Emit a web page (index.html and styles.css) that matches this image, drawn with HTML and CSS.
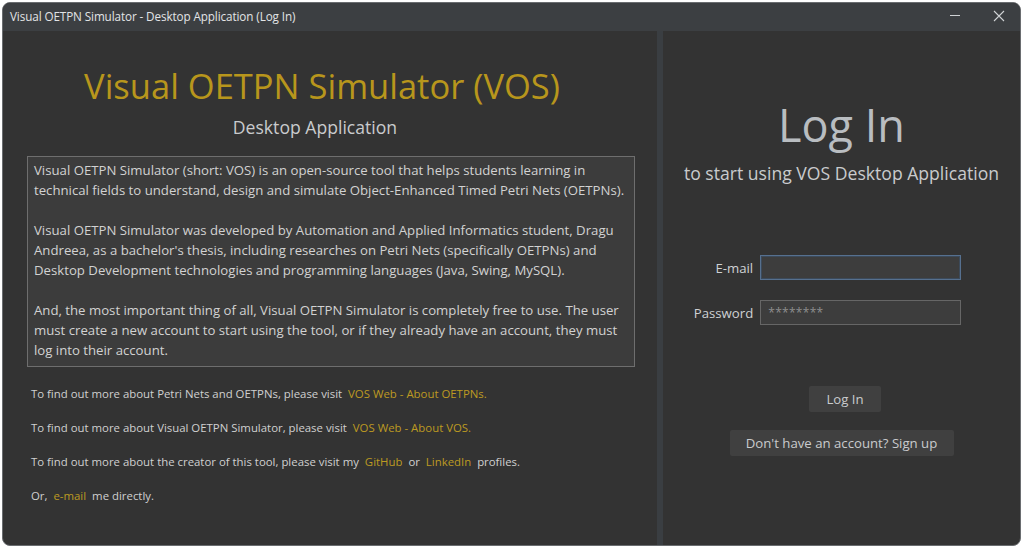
FILE: index.html
```html
<!DOCTYPE html>
<html>
<head>
<meta charset="utf-8">
<link rel="stylesheet" href="styles.css">
</head>
<body>
<div class="window">
  <div class="titlebar">
    <span class="title">Visual OETPN Simulator - Desktop Application (Log In)</span>
    <div class="controls">
      <svg class="min" width="12" height="12" viewBox="0 0 12 12"><path d="M1 5.5h10" stroke="#cfd2d4" stroke-width="1"/></svg>
      <svg class="close" width="12" height="12" viewBox="0 0 12 12"><path d="M1 1L11 11M11 1L1 11" stroke="#cfd2d4" stroke-width="1.1"/></svg>
    </div>
  </div>
  <div class="content">
    <div class="left">
      <h1 class="heading">Visual OETPN Simulator (VOS)</h1>
      <div class="subheading">Desktop Application</div>
      <div class="desc">
        <p>Visual OETPN Simulator (short: VOS) is an open-source tool that helps students learning in technical fields to understand, design and simulate Object-Enhanced Timed Petri Nets (OETPNs).</p>
        <p>Visual OETPN Simulator was developed by Automation and Applied Informatics student, Dragu Andreea, as a bachelor's thesis, including researches on Petri Nets (specifically OETPNs) and Desktop Development technologies and programming languages (Java, Swing, MySQL).</p>
        <p>And, the most important thing of all, Visual OETPN Simulator is completely free to use. The user must create a new account to start using the tool, or if they already have an account, they must log into their account.</p>
      </div>
      <div class="links">
        <div class="line">To find out more about Petri Nets and OETPNs, please visit <a class="link">VOS Web - About OETPNs.</a></div>
        <div class="line">To find out more about Visual OETPN Simulator, please visit <a class="link">VOS Web - About VOS.</a></div>
        <div class="line">To find out more about the creator of this tool, please visit my <a class="link">GitHub</a> or <a class="link">LinkedIn</a> profiles.</div>
        <div class="line">Or, <a class="link">e-mail</a> me directly.</div>
      </div>
    </div>
    <div class="divider"></div>
    <div class="right">
      <div class="login-title">Log In</div>
      <div class="login-sub">to start using VOS Desktop Application</div>
      <div class="form">
        <label class="lbl">E-mail</label>
        <div class="input focus"></div>
        <label class="lbl">Password</label>
        <div class="input"><span class="ph">********</span></div>
      </div>
      <div class="btn btn-login">Log In</div>
      <div class="btn btn-signup">Don't have an account? Sign up</div>
    </div>
  </div>
</div>
</body>
</html>
```

FILE: styles.css
```css
* { box-sizing: border-box; }
html, body { margin: 0; padding: 0; }
body {
  background: #ffffff;
  width: 1023px;
  height: 549px;
  font-family: "Open Sans", "Noto Sans", sans-serif;
  padding: 2px 2px 3px 2px;
}
.window {
  width: 1019px;
  height: 544px;
  border-radius: 8px;
  border: 1px solid #6a6d70;
  background: #333333;
  overflow: hidden;
  display: flex;
  flex-direction: column;
}
.titlebar {
  height: 28px;
  background: #3c3f42;
  display: flex;
  align-items: center;
  justify-content: space-between;
  padding-left: 7px;
  padding-bottom: 2px;
  flex-shrink: 0;
}
.title {
  color: #e2e4e6;
  font-size: 11.7px;
  letter-spacing: -0.1px;
}
.controls {
  display: flex;
  align-items: center;
  gap: 32px;
  padding-right: 15px;
}
.content {
  flex: 1;
  display: flex;
}
.left {
  width: 654px;
  display: flex;
  flex-direction: column;
  padding: 32px 0 0 24px;
}
.divider {
  width: 6px;
  background: #3a3e42;
}
.right {
  flex: 1;
  display: flex;
  flex-direction: column;
  align-items: center;
}
.heading {
  margin: 0;
  font-weight: normal;
  font-size: 34.5px;
  line-height: 46px;
  color: #b8961c;
  text-align: center;
  width: 590px;
}
.subheading {
  margin-top: 6px;
  font-size: 17.6px;
  line-height: 24px;
  color: #c9cbcd;
  text-align: center;
  width: 576px;
}
.desc {
  margin-top: 17px;
  width: 608px;
  height: 211px;
  border: 1px solid #6e6e6e;
  background: #3c3c3c;
  padding: 3px 6px;
  color: #d2d2d2;
  font-size: 13.2px;
  line-height: 20px;
}
.desc p { margin: 0 0 20px 0; }
.desc p:last-child { margin-bottom: 0; }
.links {
  margin-top: 17px;
  padding-left: 4px;
  font-size: 11.4px;
  color: #d0d0d0;
}
.line {
  height: 34px;
  line-height: 20px;
}
.link {
  color: #bd9a22;
  margin: 0 3px;
}
.login-title {
  margin-top: 67px;
  font-size: 45px;
  line-height: 54px;
  color: #b9bdc1;
}
.login-sub {
  margin-top: 9px;
  font-size: 17.6px;
  line-height: 24px;
  color: #c9cbcd;
}
.form {
  margin-top: 70px;
  display: grid;
  grid-template-columns: auto 201px;
  column-gap: 7px;
  row-gap: 20px;
  align-items: center;
  margin-left: -28px;
}
.lbl {
  text-align: right;
  color: #cfd1d3;
  font-size: 13.2px;
}
.input {
  height: 25px;
  border: 1px solid #666666;
  background: #3d3d3d;
  padding-left: 7px;
  display: flex;
  align-items: center;
}
.input.focus {
  border: 1px solid #56708f;
  box-shadow: inset 0 0 0 1px #3c4a5a;
}
.ph {
  color: #8e8e8e;
  font-size: 12px;
  letter-spacing: 0.3px;
}
.btn {
  height: 26px;
  background: #404040;
  border-radius: 2px;
  color: #c9cbcd;
  font-size: 13.2px;
  display: flex;
  align-items: center;
  justify-content: center;
}
.btn-login {
  margin-top: 61px;
  width: 72px;
  margin-left: 7px;
}
.btn-signup {
  margin-top: 18px;
  width: 224px;
}
```
